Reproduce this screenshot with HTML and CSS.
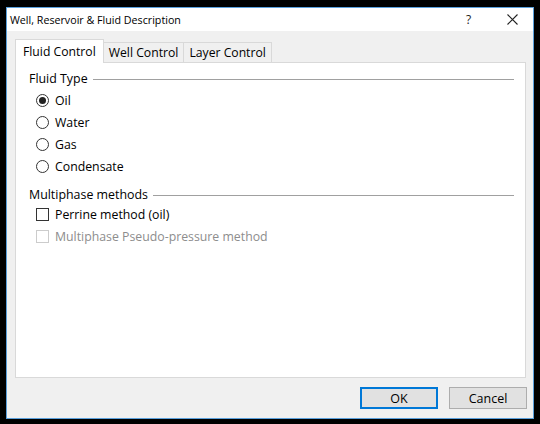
FILE: index.html
```html
<!DOCTYPE html>
<html>
<head>
<meta charset="utf-8">
<link rel="stylesheet" href="styles.css">
</head>
<body>
<div class="window">
  <div class="titlebar">
    <span class="title">Well, Reservoir &amp; Fluid Description</span>
    <span class="help">?</span>
    <span class="close">
      <svg width="11" height="11" viewBox="0 0 11 11"><path d="M0.5 0.5 L10.5 10.5 M10.5 0.5 L0.5 10.5" stroke="#222" stroke-width="1.1" fill="none"/></svg>
    </span>
  </div>
  <div class="client">
    <div class="tabs">
      <div class="tab active">Fluid Control</div>
      <div class="tab">Well Control</div>
      <div class="tab">Layer Control</div>
    </div>
    <div class="panel">
      <div class="group">
        <div class="group-head"><span>Fluid Type</span><span class="rule"></span></div>
        <div class="options radios">
          <div class="opt"><span class="radio checked"></span><span>Oil</span></div>
          <div class="opt"><span class="radio"></span><span>Water</span></div>
          <div class="opt"><span class="radio"></span><span>Gas</span></div>
          <div class="opt"><span class="radio"></span><span>Condensate</span></div>
        </div>
      </div>
      <div class="group group2">
        <div class="group-head"><span>Multiphase methods</span><span class="rule"></span></div>
        <div class="options checks">
          <div class="opt"><span class="check"></span><span>Perrine method (oil)</span></div>
          <div class="opt disabled"><span class="check"></span><span>Multiphase Pseudo-pressure method</span></div>
        </div>
      </div>
    </div>
    <div class="buttons">
      <button class="btn default">OK</button>
      <button class="btn">Cancel</button>
    </div>
  </div>
</div>
</body>
</html>
```
FILE: styles.css
```css
html, body {
  margin: 0;
  padding: 0;
  background: #000;
}
body {
  padding: 7px 0 0 6px;
  font-family: "Open Sans", "Noto Sans", sans-serif;
  font-size: 12px;
  color: #000;
}
.window {
  width: 528px;
  height: 412px;
  box-sizing: border-box;
  border: 1px solid #5aa0dc;
  background: #f0f0f0;
  display: flex;
  flex-direction: column;
}
.titlebar {
  height: 23px;
  background: #fff;
  display: flex;
  align-items: center;
  padding-left: 3px;
  flex-shrink: 0;
}
.title {
  flex: 1;
  font-size: 10.7px;
  color: #000;
}
.help {
  width: 6px;
  margin-right: 35px;
  font-size: 12px;
  color: #222;
}
.close {
  width: 11px;
  height: 11px;
  margin-right: 15px;
  display: flex;
}
.client {
  padding: 8px 6px 0 8px;
  display: flex;
  flex-direction: column;
}
.tabs {
  height: 23px;
  display: flex;
  align-items: flex-end;
  position: relative;
  z-index: 1;
}
.tab {
  height: 20px;
  box-sizing: border-box;
  border: 1px solid #d9d9d9;
  border-bottom: none;
  border-left: none;
  background: #f0f0f0;
  padding: 0 5px;
  display: flex;
  align-items: center;
  font-size: 12.2px;
}
.tab.active {
  height: 24px;
  margin-bottom: -1px;
  background: #fff;
  border-left: 1px solid #d9d9d9;
  padding: 0 7px;
}
.panel {
  height: 316px;
  box-sizing: border-box;
  margin-right: 1px;
  background: #fff;
  border: 1px solid #d9d9d9;
  padding: 7px 11px 0 13px;
}
.group-head {
  height: 16px;
  display: flex;
  align-items: center;
  gap: 5px;
  font-size: 12.4px;
}
.rule {
  flex: 1;
  height: 1px;
  background: #a0a0a0;
  margin-top: 2px;
}
.radios {
  margin-top: 3px;
}
.opt {
  height: 22px;
  display: flex;
  align-items: center;
  gap: 6px;
  padding-left: 7px;
  font-size: 12.3px;
}
.radio {
  width: 13px;
  height: 13px;
  box-sizing: border-box;
  border: 1px solid #333;
  border-radius: 50%;
  display: flex;
  align-items: center;
  justify-content: center;
}
.radio.checked::after {
  content: "";
  width: 7px;
  height: 7px;
  border-radius: 50%;
  background: #222;
}
.group2 {
  margin-top: 9px;
}
.checks {
  margin-top: 1px;
}
.check {
  width: 13px;
  height: 13px;
  box-sizing: border-box;
  border: 1px solid #333;
}
.opt.disabled {
  color: #8d8d8d;
}
.opt.disabled .check {
  border-color: #cccccc;
}
.buttons {
  display: flex;
  justify-content: flex-end;
  gap: 11px;
  margin-top: 9px;
}
.btn {
  width: 78px;
  height: 22px;
  box-sizing: border-box;
  border: 1px solid #adadad;
  background: #e1e1e1;
  font-family: "Open Sans", "Noto Sans", sans-serif;
  font-size: 12.5px;
  color: #000;
  padding: 0;
}
.btn.default {
  border: 2px solid #0078d7;
}
```
